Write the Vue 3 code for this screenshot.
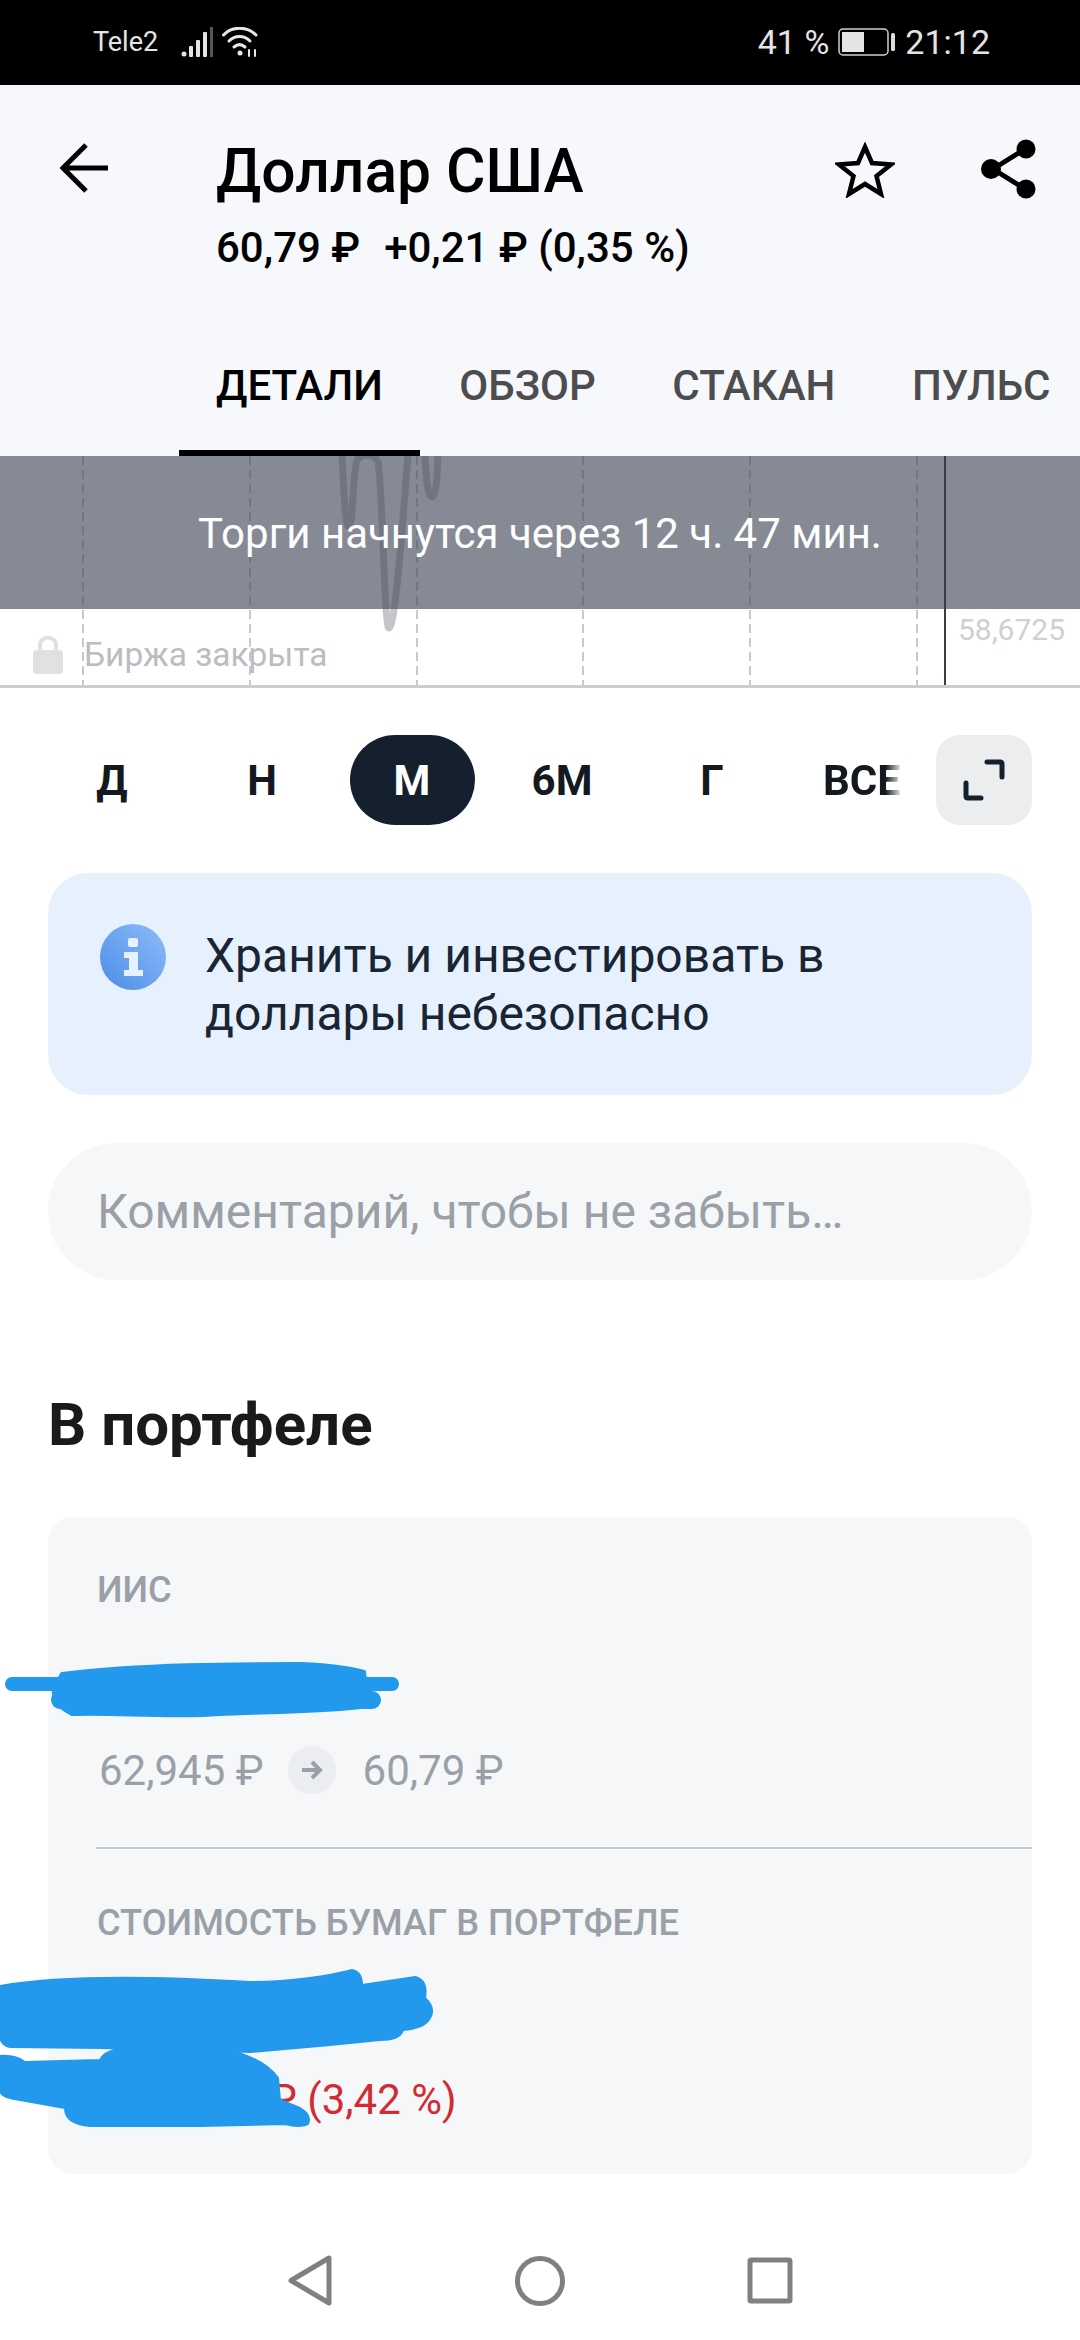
<script setup>
const tabs = ['ДЕТАЛИ', 'ОБЗОР', 'СТАКАН', 'ПУЛЬС']
const periods = ['Д', 'Н', 'М', '6М', 'Г', 'ВСЕ']
const gridLines = [83, 250, 417, 583, 750, 917]
const chartPath = 'M342 456 C344 490 345 527 349 527 C353 527 353 470 357 460 C361 454 374 452 378 462 C383 490 384 628 389 628 C396 628 404 500 408 456 M425 456 C426 480 428 497 432 497 C436 497 437 480 438 456'
</script>

<template>
  <div class="page">
    <div class="status">
      <div class="status-left">
        <span class="carrier">Tele2</span>
        <svg class="signal" width="32" height="30" viewBox="0 0 32 30">
          <circle cx="3" cy="27" r="2.5" fill="#e4e4e4" />
          <rect x="8" y="19" width="4" height="11" rx="1" fill="#e4e4e4" />
          <rect x="15" y="13" width="4" height="17" rx="1" fill="#e4e4e4" />
          <rect x="22" y="5" width="4" height="25" rx="1" fill="#e4e4e4" />
          <rect x="29" y="0" width="3" height="30" fill="#555" />
        </svg>
        <svg class="wifi" width="37" height="30" viewBox="0 0 37 30" fill="none" stroke="#e8e8e8" stroke-width="3" stroke-linecap="round">
          <path d="M1.5 8 C10 -1 25 -1 34 8" />
          <path d="M7 14 C13 8 22 8 28 14" />
          <path d="M12 20 C15.500 17 19.500 17 23 20" />
          <circle cx="18" cy="26" r="2.500" fill="#e8e8e8" stroke="none" />
          <path d="M27 29 V23 M33 23 V29" stroke-width="2" />
        </svg>
      </div>
      <div class="status-right">
        <span>41 %</span>
        <svg class="battery" width="58" height="28" viewBox="0 0 58 28" fill="none">
          <rect x="1" y="1" width="49" height="26" rx="4" stroke="#cfcfcf" stroke-width="1.500" />
          <rect x="4" y="4" width="22" height="20" fill="#e4e4e4" />
          <rect x="53" y="5" width="4" height="18" rx="1.500" fill="#dcdcdc" />
        </svg>
        <span>21:12</span>
      </div>
    </div>

    <header class="header">
      <div class="head-row">
        <svg class="back" width="50" height="50" viewBox="0 0 50 50" fill="none" stroke="#000" stroke-width="5">
          <path d="M48 25 H4 M26 2 L3 25 L26 48" />
        </svg>
        <div class="head-text">
          <h1 class="title">Доллар США</h1>
          <div class="sub"><span>60,79 ₽</span><span>+0,21 ₽ (0,35 %)</span></div>
        </div>
        <svg class="star" width="60" height="56" viewBox="0 0 60 56" fill="none" stroke="#000" stroke-width="4.500" stroke-linejoin="miter">
          <path d="M30 5 L37 21 L56 22.500 L41.500 34 L46 52 L30 42 L14 52 L18.500 34 L4 22.500 L23 21 Z" />
        </svg>
        <svg class="share" width="56" height="60" viewBox="0 0 56 60" fill="#000" stroke="#000">
          <path d="M44 10 L12 30 L44 50" fill="none" stroke-width="5" />
          <circle cx="45" cy="10" r="9.500" stroke="none" />
          <circle cx="10" cy="30" r="10" stroke="none" />
          <circle cx="45" cy="50" r="9.500" stroke="none" />
        </svg>
      </div>
      <nav class="tabs">
        <div v-for="(t, i) in tabs" :key="t" class="tab" :class="{ active: i === 0 }">{{ t }}</div>
      </nav>
    </header>

    <section class="chart">
      <svg class="chart-svg" width="1080" height="232" viewBox="0 456 1080 232" fill="none">
        <line v-for="x in gridLines" :key="x" :x1="x" :x2="x" y1="456" y2="685" stroke="#c9c9cc" stroke-width="2" stroke-dasharray="9 5" />
        <path :d="chartPath" stroke="#c4c6c9" stroke-width="7" stroke-linecap="round" />
      </svg>
      <div class="closed">
        <svg width="30" height="38" viewBox="0 0 30 38">
          <path d="M7 16 V10 C7 -1 23 -1 23 10 V16" fill="none" stroke="#e0e1e3" stroke-width="4" />
          <rect x="0" y="14" width="30" height="24" rx="4" fill="#e0e1e3" />
        </svg>
        <span>Биржа закрыта</span>
      </div>
      <div class="price-label">58,6725</div>
      <div class="overlay">Торги начнутся через 12 ч. 47 мин.</div>
      <div class="cursor"></div>
    </section>

    <div class="periods">
      <div v-for="p in periods" :key="p" class="period" :class="{ active: p === 'М', fade: p === 'ВСЕ' }">
        <span>{{ p }}</span>
      </div>
      <div class="expand">
        <svg width="42" height="42" viewBox="0 0 42 42" fill="none" stroke="#14202e" stroke-width="5" stroke-linecap="round" stroke-linejoin="round">
          <path d="M24 3 H37 Q39 3 39 5 V18" />
          <path d="M3 24 V37 Q3 39 5 39 H18" />
        </svg>
      </div>
    </div>

    <div class="notice">
      <svg class="info" width="66" height="66" viewBox="0 0 66 66">
        <defs>
          <linearGradient id="infoFill" x1="0" y1="1" x2="1" y2="0">
            <stop offset="0" stop-color="#4c8ce6" />
            <stop offset="1" stop-color="#8fbcf9" />
          </linearGradient>
        </defs>
        <circle cx="33" cy="33" r="33" fill="url(#infoFill)" />
        <rect x="28" y="14" width="10" height="9" rx="2" fill="#e6f1fd" />
        <path d="M24 28 H38 V46 H43 V52 H24 V46 H29 V34 H24 Z" fill="#e6f1fd" />
      </svg>
      <p>Хранить и инвестировать в<br />доллары небезопасно</p>
    </div>

    <div class="comment">Комментарий, чтобы не забыть…</div>

    <h2 class="section-title">В портфеле</h2>

    <div class="card">
      <div class="block first">
        <div class="label">ИИС</div>
        <div class="rate">
          <span>62,945 ₽</span>
          <span class="arrow">
            <svg width="22" height="20" viewBox="0 0 22 20" fill="none" stroke="#9a9fa8" stroke-width="4">
              <path d="M1 10 H19 M11 2 L19 10 L11 18" />
            </svg>
          </span>
          <span>60,79 ₽</span>
        </div>
      </div>
      <div class="divider"></div>
      <div class="block second">
        <div class="label">СТОИМОСТЬ БУМАГ В ПОРТФЕЛЕ</div>
        <div class="loss">₽ (3,42 %)</div>
      </div>
    </div>

    <div class="navbar">
      <svg width="60" height="52" viewBox="0 0 60 52" fill="none" stroke="#808080" stroke-width="5" stroke-linejoin="round">
        <path d="M49 3 V48 L11 25.500 Z" />
      </svg>
      <svg width="60" height="52" viewBox="0 0 60 52" fill="none" stroke="#808080" stroke-width="5">
        <circle cx="30" cy="26" r="22.500" />
      </svg>
      <svg width="60" height="52" viewBox="0 0 60 52" fill="none" stroke="#808080" stroke-width="5" stroke-linejoin="round">
        <rect x="10" y="5" width="40" height="41" rx="1" />
      </svg>
    </div>

    <svg class="scribbles" width="1080" height="2340" viewBox="0 0 1080 2340" fill="#2299ec" stroke="#2299ec" stroke-linecap="round" stroke-linejoin="round">
      <path d="M12 1684 H392" fill="none" stroke-width="14" />
      <path d="M60 1700 H372" fill="none" stroke-width="18" />
      <path d="M62 1674 C140 1664 240 1664 300 1664 C320 1664 350 1668 364 1672 L368 1706 C330 1712 260 1712 220 1714 C170 1718 110 1712 72 1714 Q52 1704 54 1690 Z" stroke-width="4" />
      <path d="M0 1986 C60 1975 150 1976 250 1982 C290 1982 330 1976 352 1970 Q362 1972 362 1985 L415 1977 Q428 1980 425 1998 Q436 2008 430 2018 Q425 2028 403 2030 Q400 2040 380 2040 L330 2045 L250 2052 L100 2048 L10 2047 Q0 2045 0 2035 Z" stroke-width="2" />
      <path d="M0 2056 Q15 2055 25 2062 L100 2060 Q105 2050 125 2048 L235 2052 Q265 2060 278 2078 L280 2100 L300 2108 Q312 2115 308 2124 Q300 2128 285 2124 L200 2126 L90 2126 Q65 2124 65 2108 L20 2100 Q0 2098 0 2090 Z" stroke-width="2" />
    </svg>
  </div>
</template>

<style>
html, body {
  margin: 0;
  background: #fff;
}
</style>

<style scoped>
.page {
  position: relative;
  width: 1080px;
  height: 2340px;
  overflow: hidden;
  background: #fff;
  font-family: Roboto, "Noto Sans", sans-serif;
  color: #1a2533;
}
.status {
  height: 85px;
  box-sizing: border-box;
  padding: 26px 90px 0 93px;
  display: flex;
  justify-content: space-between;
  align-items: flex-start;
  background: #000;
  color: #e4e4e4;
}
.status-left {
  display: flex;
  align-items: center;
  gap: 0;
  height: 32px;
}
.carrier {
  font-size: 27px;
  width: 88px;
}
.wifi {
  margin-left: 9px;
}
.status-right {
  display: flex;
  align-items: center;
  gap: 9px;
  font-size: 34px;
  height: 32px;
}
.header {
  height: 371px;
  box-sizing: border-box;
  background: #f6f8fb;
  display: flex;
  flex-direction: column;
  color: #000;
}
.head-row {
  display: flex;
  align-items: flex-start;
  padding: 54px 43px 0 60px;
}
.back {
  margin-top: 4px;
}
.head-text {
  margin-left: 106px;
  flex: 1;
}
.title {
  margin: 0;
  font-size: 60.5px;
  font-weight: 500;
  line-height: 66px;
}
.sub {
  display: flex;
  gap: 24px;
  margin-top: 20px;
  font-size: 42px;
  font-weight: 500;
  line-height: 46px;
}
.star {
  margin: 3px 0 0;
}
.share {
  margin-left: 86px;
}
.tabs {
  display: flex;
  gap: 2.500px;
  padding-left: 179px;
  margin-top: auto;
}
.tab {
  padding: 3px 37px 0;
  height: 98px;
  box-sizing: border-box;
  font-size: 42px;
  font-weight: 500;
  line-height: 50px;
  color: #4d4d4f;
  white-space: nowrap;
}
.tab.active {
  color: #000;
  border-bottom: 6px solid #000;
}
.chart {
  position: relative;
  height: 232px;
  box-sizing: border-box;
  border-bottom: 3px solid #ccc;
  background: #fff;
}
.chart-svg {
  position: absolute;
  left: 0;
  top: 0;
}
.overlay {
  position: absolute;
  left: 0;
  right: 0;
  top: 0;
  height: 153px;
  box-sizing: border-box;
  padding-top: 2px;
  display: flex;
  align-items: center;
  justify-content: center;
  background: rgba(63, 69, 86, 0.63);
  color: #fff;
  font-size: 42px;
}
.cursor {
  position: absolute;
  left: 944px;
  top: 0;
  bottom: 0;
  width: 2px;
  background: #3a3d45;
}
.closed {
  position: absolute;
  left: 33px;
  top: 179px;
  display: flex;
  align-items: center;
  gap: 21px;
  color: #bcbdc0;
  font-size: 33.5px;
}
.price-label {
  position: absolute;
  left: 958px;
  top: 156px;
  color: #cfd0d2;
  font-size: 30px;
}
.periods {
  display: flex;
  align-items: center;
  height: 90px;
  margin-top: 47px;
  padding-left: 37px;
}
.period {
  width: 150px;
  display: flex;
  justify-content: center;
  font-size: 42px;
  font-weight: 700;
  color: #14181f;
}
.period.active span {
  width: 125px;
  height: 90px;
  border-radius: 45px;
  display: flex;
  align-items: center;
  justify-content: center;
  background: #14202e;
  color: #fff;
}
.period.fade span {
  -webkit-mask-image: linear-gradient(to right, #000 80%, transparent 102%);
  mask-image: linear-gradient(to right, #000 80%, transparent 102%);
}
.expand {
  width: 96px;
  height: 90px;
  margin-left: -1px;
  border-radius: 24px;
  background: #ebedef;
  display: flex;
  align-items: center;
  justify-content: center;
}
.notice {
  margin: 48px 48px 0;
  height: 222px;
  box-sizing: border-box;
  padding: 51px 52px 0;
  display: flex;
  gap: 39px;
  border-radius: 40px;
  background: #e6f1fd;
}
.notice p {
  margin: 3px 0 0;
  font-size: 48px;
  line-height: 58px;
  color: #1a2533;
}
.comment {
  margin: 48px 48px 0;
  height: 137px;
  box-sizing: border-box;
  padding: 0 49px;
  display: flex;
  align-items: center;
  border-radius: 68px;
  background: #f5f7f9;
  font-size: 48px;
  color: #9a9fa8;
}
.section-title {
  margin: 113px 0 0 48px;
  height: 64px;
  font-size: 60px;
  font-weight: 700;
  line-height: 64px;
  color: #1a1a1a;
}
.card {
  margin: 60px 48px 0;
  height: 657px;
  box-sizing: border-box;
  border-radius: 26px;
  background: #f5f7f9;
  color: #9a9fa8;
}
.block {
  padding-left: 49px;
}
.first {
  padding-top: 53px;
  height: 330px;
  box-sizing: border-box;
}
.second {
  padding-top: 54px;
}
.label {
  font-size: 36.2px;
  font-weight: 500;
  line-height: 40px;
  color: #9a9fa8;
}
.rate {
  display: flex;
  align-items: center;
  height: 48px;
  margin-top: 136px;
  padding-left: 2px;
  font-size: 42px;
  color: #9a9fa8;
}
.arrow {
  width: 48px;
  height: 48px;
  margin: 0 27px 0 24px;
  border-radius: 50%;
  background: #ebedf0;
  display: flex;
  align-items: center;
  justify-content: center;
}
.divider {
  height: 2px;
  margin-left: 48px;
  background: #c5c8ce;
}
.loss {
  margin-top: 133px;
  padding-left: 172px;
  font-size: 42px;
  line-height: 48px;
  color: #d12c33;
}
.navbar {
  display: flex;
  justify-content: center;
  gap: 170px;
  margin-top: 81px;
}
.scribbles {
  position: absolute;
  left: 0;
  top: 0;
  pointer-events: none;
}
</style>
